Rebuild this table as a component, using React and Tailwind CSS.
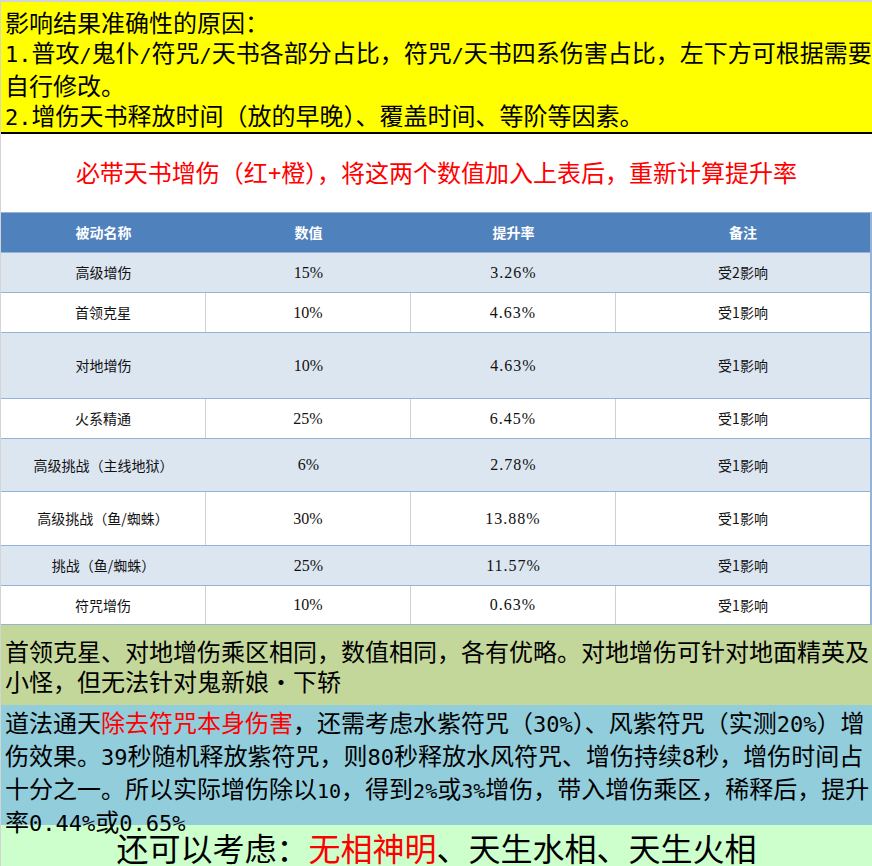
import React from 'react';

const rows = [
  { name: '高级增伤', value: '15%', rate: '3.26%', note: '受2影响', h: 'h-[40px]', blue: true },
  { name: '首领克星', value: '10%', rate: '4.63%', note: '受1影响', h: 'h-[40px]' },
  { name: '对地增伤', value: '10%', rate: '4.63%', note: '受1影响', h: 'h-[66px]', blue: true },
  { name: '火系精通', value: '25%', rate: '6.45%', note: '受1影响', h: 'h-[40px]' },
  { name: '高级挑战（主线地狱）', value: '6%', rate: '2.78%', note: '受1影响', h: 'h-[53px]', blue: true },
  { name: '高级挑战（鱼/蜘蛛）', value: '30%', rate: '13.88%', note: '受1影响', h: 'h-[54px]' },
  { name: '挑战（鱼/蜘蛛）', value: '25%', rate: '11.57%', note: '受1影响', h: 'h-[40px]', blue: true },
  { name: '符咒增伤', value: '10%', rate: '0.63%', note: '受1影响', h: 'h-[39px]' },
];

const cjk = "font-['Noto_Sans_CJK_SC',sans-serif]";
const num = "font-['Liberation_Serif','Noto_Sans_CJK_SC',serif]";

// half-width run (digits, slashes) — mono so every char is about 12-13px wide like the sheet
function H({ children, small }) {
  const size = small ? 'text-[20px]' : 'text-[22px]';
  return <span className={`font-['DejaVu_Sans_Mono','Noto_Sans_CJK_SC',monospace] ${size}`}>{children}</span>;
}

function Row({ r }) {
  // blue rows: no vertical grid lines, white rows: light gray dividers
  const bg = r.blue ? 'bg-[#dce6f1]' : 'bg-white';
  const div = r.blue ? '' : 'border-r border-[#d0d0d0]';
  return (
    <div className={`grid grid-cols-[205px_205px_205px_1fr] ${r.h} ${bg} border-b border-[#95b3d7] text-[14px] text-[#111]`}>
      <div className={`flex items-center justify-center ${div} ${cjk}`}>{r.name}</div>
      <div className={`flex items-center justify-center ${div} ${num} text-[16px]`}>{r.value}</div>
      <div className={`flex items-center justify-center ${div} ${num} text-[16px] tracking-[1px]`}>{r.rate}</div>
      <div className={`flex items-center justify-center ${cjk}`}>{r.note}</div>
    </div>
  );
}

export default function App() {
  return (
    <div className={`w-[872px] h-[866px] overflow-hidden bg-white border-t-2 border-l border-[#d4d4d4] ${cjk} text-black`}>
      {/* 说明 */}
      <div className="bg-[#ffff00] h-[132px] pt-[5px] pl-[4px] text-[24px] leading-[30px] border-b-2 border-black">
        <div className="whitespace-nowrap">影响结果准确性的原因：</div>
        <div className="whitespace-nowrap">
          <H>1.</H>普攻<H small>/</H>鬼仆<H small>/</H>符咒<H small>/</H>天书各部分占比，符咒<H small>/</H>天书四系伤害占比，左下方可根据需要
        </div>
        <div className="whitespace-nowrap">自行修改。</div>
        <div className="whitespace-nowrap">
          <H>2.</H>增伤天书释放时间（放的早晚）、覆盖时间、等阶等因素。
        </div>
      </div>

      <div className="h-[79px] flex items-center justify-center pb-[2px] text-[24px] text-[#ff0000] border-b border-[#95b3d7]">
        必带天书增伤（红<H>+</H>橙），将这两个数值加入上表后，重新计算提升率
      </div>

      {/* 表格 */}
      <div className="border-r-2 border-[#95b3d7]">
        <div className="grid grid-cols-[205px_205px_205px_1fr] h-[40px] bg-[#4f81bd] text-white text-[14px] font-bold border-b border-[#95b3d7]">
          <div className="flex items-center justify-center">被动名称</div>
          <div className="flex items-center justify-center">数值</div>
          <div className="flex items-center justify-center">提升率</div>
          <div className="flex items-center justify-center">备注</div>
        </div>
        {rows.map((r) => (
          <Row key={r.name} r={r} />
        ))}
      </div>

      <div className="bg-[#c4d79b] h-[80px] pt-[11px] pl-[4px] text-[24px] leading-[30px]">
        <div className="whitespace-nowrap">首领克星、对地增伤乘区相同，数值相同，各有优略。对地增伤可针对地面精英及</div>
        <div className="whitespace-nowrap">小怪，但无法针对鬼新娘·下轿</div>
      </div>

      <div className="bg-[#92cddc] h-[120px] pt-[2px] pl-[4px] text-[24px] leading-[30px]">
        <div className="whitespace-nowrap">
          道法通天<span className="text-[#ff0000]">除去符咒本身伤害</span>，还需考虑水紫符咒（<H>30%</H>）、风紫符咒（实测<H>20%</H>）增
        </div>
        <div className="whitespace-nowrap">
          伤效果。<H>39</H>秒随机释放紫符咒，则<H>80</H>秒释放水风符咒、增伤持续<H>8</H>秒，增伤时间占
        </div>
        <div className="whitespace-nowrap">
          十分之一。所以实际增伤除以<H small>10</H>，得到<H small>2%</H>或<H small>3%</H>增伤，带入增伤乘区，稀释后，提升
        </div>
        <div className="whitespace-nowrap">
          率<H>0.44%</H>或<H>0.65%</H>
        </div>
      </div>

      <div className="bg-[#ccffcc] h-[41px] flex items-center justify-center text-[32px] leading-[38px] pt-[3px]">
        还可以考虑：<span className="text-[#ff0000]">无相神明</span>、天生水相、天生火相
      </div>
    </div>
  );
}
